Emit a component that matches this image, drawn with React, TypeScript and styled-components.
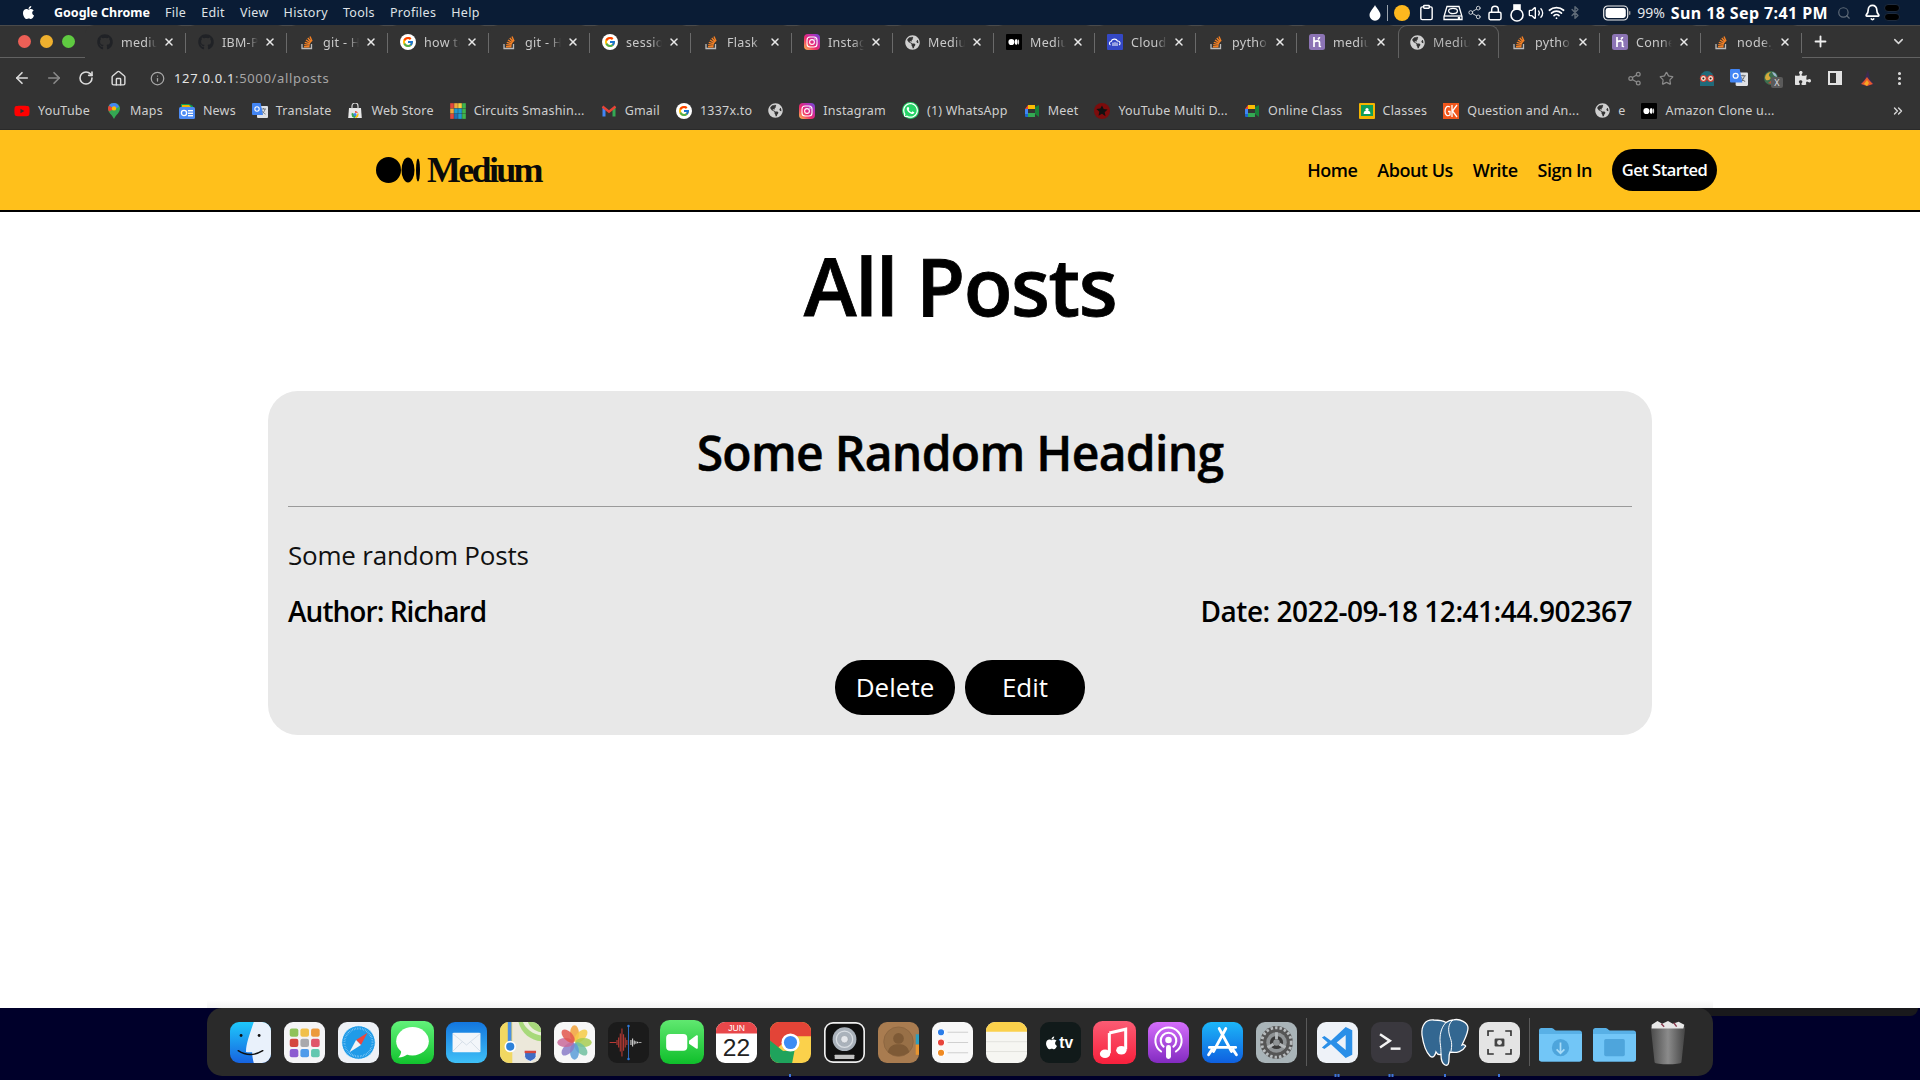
import React from "react";
import styled, { createGlobalStyle } from "styled-components";
import {
  ArrowLeft, ArrowRight, RotateCw, Home, Info, Share2, Star, EllipsisVertical,
  ChevronDown, Plus, X, Search, Bell, Lock, Clipboard, Wifi, Volume2, Bluetooth, ChevronsRight,
} from "lucide-react";
import { FaApple, FaGithub, FaGlobeAmericas, FaPuzzlePiece, FaWhatsapp, FaYoutube } from "react-icons/fa";
import { FcGoogle } from "react-icons/fc";

const Global = createGlobalStyle`
  html, body { margin: 0; padding: 0; background: #fff; }
  * { box-sizing: border-box; }
  #root { width: 1920px; height: 1080px; overflow: hidden; }
`;

const Screen = styled.div`
  width: 1920px; height: 1080px; display: flex; flex-direction: column; overflow: hidden;
  font-family: "Open Sans", "Noto Sans", sans-serif;
`;

/* ---------- macOS menu bar ---------- */
const MenuBar = styled.div`
  height: 25px; flex: none; background: #0a1c35; display: flex; align-items: center; padding-left: 21px;
  color: #e6e8ec; font: 12.5px "Noto Sans", sans-serif;
`;
const MenuItems = styled.div`display: flex; gap: 15px; margin-left: 18px;`;
const MenuItem = styled.span<{ $bold?: boolean }>`
  font-weight: ${(p) => (p.$bold ? 700 : 400)};
  letter-spacing: ${(p) => (p.$bold ? 0 : ".32px")};
  color: ${(p) => (p.$bold ? "#fff" : "#dfe2e7")};
`;
const StatusArea = styled.div`margin-left: auto; display: flex; align-items: center; height: 25px; padding-right: 20px;`;
const StatusCell = styled.span<{ $w: number; $end?: boolean }>`
  width: ${(p) => p.$w}px; display: flex; align-items: center; color: #fff;
  justify-content: ${(p) => (p.$end ? "flex-end" : "center")};
`;
const StatusDivider = styled.span`width: 1.5px; height: 16px; background: #9aa3ad;`;
const SunDot = styled.span`width: 16px; height: 16px; border-radius: 50%; background: #fdb81e;`;
const Percent = styled.span`margin-left: 6px; color: #e4e6ea; font-size: 14px; letter-spacing: 0;`;
const Clock = styled.span`margin-left: 6px; color: #fff; font-weight: 700; font-size: 16px; letter-spacing: .4px; white-space: nowrap;`;
const ToggleStack = styled.span`display: flex; flex-direction: column; gap: 1px;`;
const ToggleBar = styled.span`width: 16px; height: 8px; border-radius: 4px; background: #000; border: 1px solid #1d2a3d;`;

/* ---------- Chrome tabs ---------- */
const TabStrip = styled.div`
  height: 33px; flex: none; background: #333; display: flex; align-items: stretch;
  border-top: 1px solid #4a4a4a; border-bottom: 1px solid #626262;
`;
const Lights = styled.div`width: 85px; flex: none; display: flex; align-items: center; gap: 9px; padding-left: 18px;`;
const Light = styled.span<{ $c: string }>`width: 13px; height: 13px; border-radius: 50%; background: ${(p) => p.$c};`;
const Tab = styled.div<{ $active?: boolean; $sep?: boolean }>`
  width: 101px; flex: none; position: relative; display: flex; align-items: center; padding: 0 10px 0 11px;
  border: 1px solid ${(p) => (p.$active ? "#626262" : "transparent")};
  border-width: 1px 1px 0 1px;
  border-radius: 9px 9px 0 0;
  margin: -1px 0 -1px;
  background: #333;
  z-index: ${(p) => (p.$active ? 1 : 0)};
  &::after {
    content: "";
    display: ${(p) => (p.$sep ? "block" : "none")};
    position: absolute; right: -1px; top: 7px; height: 20px; width: 1px; background: #6a6a6a;
  }
`;
const TabTitle = styled.span<{ $active?: boolean }>`
  flex: 1; min-width: 0; margin: 0 6px 0 8px; overflow: hidden; white-space: nowrap;
  font: 12.5px "Noto Sans", sans-serif; letter-spacing: .3px;
  color: ${(p) => (p.$active ? "#b4b4b4" : "#c9c9c9")};
  -webkit-mask-image: linear-gradient(90deg, #000 70%, transparent 100%);
  mask-image: linear-gradient(90deg, #000 70%, transparent 100%);
`;
const NewTab = styled.span`display: flex; align-items: center; margin-left: 10px; color: #f0f0f0;`;
const TabMenu = styled.span`display: flex; align-items: center; margin-left: auto; padding-right: 14px; color: #d8d8d8;`;

/* ---------- toolbar ---------- */
const Toolbar = styled.div`height: 40px; flex: none; background: #333; display: flex; align-items: center; padding: 0 5px 0 6px;`;
const ToolButton = styled.span<{ $dim?: boolean }>`
  width: 32px; display: flex; justify-content: center; align-items: center;
  color: ${(p) => (p.$dim ? "#8a8a8a" : "#dcdcdc")};
`;
const Address = styled.div`display: flex; align-items: center; gap: 9px; margin-left: 16px; color: #a6a6a6; font: 13px "Noto Sans", sans-serif; letter-spacing: .66px;`;
const Host = styled.span`color: #e4e4e4;`;
const ToolRight = styled.div`margin-left: auto; display: flex; align-items: center;`;
const ToolGap = styled.span`width: 9px;`;
const ExtBadge = styled.span`
  position: absolute; left: 16px; top: 9px; width: 12px; height: 11px; border-radius: 2px; background: #5a5a5a;
  color: #ddd; font: 9px/11px "Noto Sans", sans-serif; text-align: center;
`;
const ExtSlot = styled.span`position: relative; width: 32px; height: 20px; display: flex; justify-content: center; align-items: center;`;

/* ---------- bookmarks ---------- */
const Bookmarks = styled.div`
  height: 32px; flex: none; background: #333; display: flex; align-items: center; padding: 0 14px 6px 14px; gap: 16px;
  border-bottom: 1px solid #2a2a2a;
`;
const Bookmark = styled.span`display: flex; align-items: center; gap: 8px; color: #cfcfcf; font: 12.5px "Noto Sans", sans-serif; letter-spacing: .21px; white-space: nowrap;`;
const MoreMarks = styled.span`margin-left: auto; display: flex; color: #d8d8d8; margin-right: 1px;`;

/* ---------- the page ---------- */
const Page = styled.main`flex: 1; min-height: 0; background: #fff; display: flex; flex-direction: column; position: relative;`;
const Fade = styled.div`position: absolute; left: 207px; width: 1506px; bottom: 0; height: 8px; background: linear-gradient(#fff, #f3f3f3);`;
const Nav = styled.nav`
  height: 82px; flex: none; background: #ffc01b; border-bottom: 2px solid #000;
  display: flex; align-items: center; justify-content: space-between; padding: 0 203px 0 376px;
`;
const Brand = styled.div`display: flex; align-items: center; gap: 7px;`;
const BrandName = styled.span`font: 700 36px "Liberation Serif", serif; letter-spacing: -2.7px; color: #0a0a0a; line-height: 1;`;
const NavLinks = styled.div`display: flex; align-items: center; gap: 20px;`;
const NavLink = styled.a`font-size: 18px; font-weight: 600; color: #000; letter-spacing: -.5px;`;
const CTA = styled.a`
  width: 105px; height: 42px; border-radius: 21px; background: #000; color: #fff; display: flex; align-items: center; justify-content: center;
  font-size: 16.5px; font-weight: 600; letter-spacing: -.5px; padding-bottom: 1px;
`;
const Title = styled.h1`
  margin: 18px 0 0; text-align: center; font-size: 80px; line-height: 110px; font-weight: 600; color: #000; letter-spacing: -1.5px;
  -webkit-text-stroke: .8px #000;
`;
const Card = styled.article`
  width: 1384px; height: 344px; margin: 51px auto 0; background: #e8e8e8; border-radius: 30px; padding: 20px;
  display: flex; flex-direction: column;
`;
const PostHeading = styled.h2`
  margin: 5px 0 0; text-align: center; font-size: 48px; line-height: 74px; font-weight: 600; color: #000; letter-spacing: -.7px;
  -webkit-text-stroke: .5px #000;
`;
const Rule = styled.hr`margin: 16px 0 0; border: 0; height: 1px; background: #9a9a9a; flex: none;`;
const Body = styled.p`margin: 28px 0 0; font-size: 26px; line-height: 40px; color: #111; letter-spacing: -.2px;`;
const Meta = styled.div`display: flex; justify-content: space-between; margin-top: 16px; font-size: 28px; line-height: 40px; font-weight: 600; color: #000; letter-spacing: -.5px;`;
const AuthorName = styled.span`letter-spacing: -.95px;`;
const Actions = styled.div`display: flex; justify-content: center; gap: 10px; margin-top: 29px;`;
const PillButton = styled.button`
  width: 120px; height: 55px; border: 0; border-radius: 27px; background: #000; color: #fff; padding: 0 0 2px;
  font: 400 26px "Open Sans", sans-serif;
`;

/* ---------- desktop and dock ---------- */
const Desktop = styled.div`height: 72px; flex: none; background: #00002a; position: relative;`;
const WindowEdge = styled.div`
  position: absolute; top: 0; left: 1700px; right: 2px; height: 8px; background: #19191c; border-radius: 0 0 9px 9px;
`;
const Dock = styled.div`
  position: relative; margin-left: 207px; width: 1506px; height: 68px; background: #2a2a2a; border-radius: 15px;
  display: flex; align-items: center; padding-left: 16px;
`;
const DockCell = styled.div`position: relative; width: 54px; height: 68px; flex: none; display: flex; align-items: center; justify-content: center;`;
const DockSep = styled.div`width: 7px; flex: none; display: flex; justify-content: center;`;
const DockSepLine = styled.span`width: 1px; height: 48px; background: #5a5a5a;`;
const Running = styled.span`
  position: absolute; left: 50%; bottom: -1px; transform: translateX(-50%); display: flex; gap: 1px;
`;
const RunDot = styled.span`width: 2px; height: 3px; background: #3f74d8;`;

/* ---------- favicons ---------- */
const Stack = () => (
  <svg width="16" height="16" viewBox="0 0 16 16" fill="none">
    <path d="M3 10v4.5h9.5V10" stroke="#bcbbbb" strokeWidth="1.3" />
    <path d="M5 12.8h5.5M5.2 10.6l5.4.6M5.8 8.3l5.2 1.6M7 6l4.6 2.8M8.8 4l3.6 4M11 2.4l2 4.8" stroke="#f48024" strokeWidth="1.4" />
  </svg>
);
const Insta = ({ id }: { id: string }) => (
  <svg width="16" height="16" viewBox="0 0 16 16" fill="none">
    <defs>
      <linearGradient id={id} x1="0" y1="1" x2="1" y2="0">
        <stop offset="0" stopColor="#fdc34d" /><stop offset=".4" stopColor="#ee2a6b" /><stop offset=".75" stopColor="#b62fb8" /><stop offset="1" stopColor="#5b51d8" />
      </linearGradient>
    </defs>
    <rect width="16" height="16" rx="4" fill={`url(#${id})`} />
    <rect x="3" y="3" width="10" height="10" rx="3" stroke="#fff" strokeWidth="1.1" />
    <circle cx="8" cy="8" r="2.4" stroke="#fff" strokeWidth="1.1" />
    <circle cx="11" cy="5" r=".7" fill="#fff" />
  </svg>
);
const MediumFav = () => (
  <svg width="16" height="16" viewBox="0 0 16 16">
    <rect width="16" height="16" rx="1" fill="#000" />
    <ellipse cx="5.4" cy="8" rx="3" ry="3.1" fill="#fff" /><ellipse cx="10.2" cy="8" rx="1.5" ry="2.9" fill="#fff" /><ellipse cx="12.6" cy="8" rx=".5" ry="2.7" fill="#fff" />
  </svg>
);
const CloudFav = () => (
  <svg width="16" height="16" viewBox="0 0 16 16" fill="none">
    <rect width="16" height="16" rx="1" fill="#3448c5" />
    <path d="M3.5 11C2 10.5 2 7.6 4.2 7.5 4.8 4.6 9.4 4.2 10.4 7c2.6-.3 3.6 3 1.6 4" stroke="#fff" strokeWidth="1.1" />
    <path d="M6 8.6V12M8 8.2V12M10 8.6V12" stroke="#fff" strokeWidth="1" />
  </svg>
);
const HerokuFav = () => (
  <svg width="16" height="16" viewBox="0 0 16 16" fill="none">
    <rect width="16" height="16" rx="2.5" fill="#8c74b5" />
    <path d="M5 3v10M5 8c2-1.3 5.5-2 5.5 .6V13M10.5 3c0 1-.6 1.6-1.6 2.4M10.2 11.4l1.6 1.6" stroke="#fff" strokeWidth="1.7" />
  </svg>
);
const GoogleFav = () => (
  <svg width="16" height="16" viewBox="0 0 16 16">
    <circle cx="8" cy="8" r="8" fill="#fff" />
    <FcGoogle x="2" y="2" size="12" />
  </svg>
);
const Globe = () => <FaGlobeAmericas size={15} color="#d0d0d0" />;
const Github = () => <FaGithub size={16} color="#202226" />;

const Maps = () => (
  <svg width="16" height="16" viewBox="-1 0 16 16">
    <path d="M7 0C3 0 1 3 1 5.6 1 9.4 5 12 7 16c2-4 6-6.6 6-10.4C13 3 11 0 7 0z" fill="#34a853" />
    <path d="M7 0C5 0 3.2 .8 2 2.4L7 6l5-2C11 1.5 9.4 0 7 0z" fill="#4285f4" />
    <path d="M1 5.6c0 1 .4 2 1 3L7 6 2 2.4C1.4 3.3 1 4.4 1 5.6z" fill="#ea4335" />
    <circle cx="7" cy="5.4" r="2.2" fill="#fbbc04" />
  </svg>
);
const News = () => (
  <svg width="16" height="16" viewBox="0 0 16 16">
    <path d="M2 1h8l4 2v4H2z" fill="#0f9d58" /><path d="M3 2h7l3 3H3z" fill="#f4b400" />
    <rect y="4" width="16" height="12" rx="1.5" fill="#4c8bf5" />
    <rect x="9" y="7" width="5" height="1.4" fill="#fff" /><rect x="9" y="9.6" width="5" height="1.4" fill="#fff" /><rect x="9" y="12" width="5" height="1.4" fill="#fff" />
    <circle cx="5" cy="10" r="2.6" fill="none" stroke="#fff" strokeWidth="1.3" />
  </svg>
);
const Translate = ({ size = 16 }: { size?: number }) => (
  <svg width={size} height={size} viewBox="0 0 16 16">
    <rect x="5" y="3" width="11" height="12" rx="1" fill="#dfe1e5" />
    <path d="M9 6h5M11.5 5v1M13 6c-.5 2.5-2 4-3.5 5M10 7.5c.5 1.4 2 3 3.5 3.6" stroke="#6b6f75" strokeWidth=".9" fill="none" />
    <path d="M1 0h7.6L11 12H1a1 1 0 01-1-1V1a1 1 0 011-1z" fill="#4285f4" />
    <circle cx="5" cy="6" r="2.2" fill="none" stroke="#fff" strokeWidth="1.1" />
  </svg>
);
const WebStore = () => (
  <svg width="16" height="16" viewBox="0 0 16 16">
    <path d="M2 5h12l.8 10H1.2z" fill="#e8e8e8" />
    <path d="M5 6V3a3 3 0 016 0v3" fill="none" stroke="#d8d8d8" strokeWidth="1.2" />
    <path d="M8 8a3.6 3.6 0 013.1 1.8H8z" fill="#ea4335" /><path d="M4.9 9.8A3.6 3.6 0 008 15l1.6-2.8z" fill="#34a853" /><path d="M11.1 9.8a3.6 3.6 0 01-3.1 5.4l1.6-3z" fill="#fbbc04" />
    <circle cx="8" cy="11.6" r="1.5" fill="#4285f4" />
  </svg>
);
const Tinkercad = () => (
  <svg width="16" height="16" viewBox="0 0 16 16">
    {["#e2483d", "#f2a93b", "#f6d13d", "#3fb54e", "#f2a93b", "#1d9bd1", "#1d9bd1", "#3fb54e", "#e2483d", "#1f6fb5", "#1d9bd1", "#3fb54e"].map((c, i) => (
      <rect key={i} x={(i % 4) * 4 + 0.2} y={Math.floor(i / 4) * 5.33 + 0.2} width="3.6" height="5" fill={c} />
    ))}
  </svg>
);
const Gmail = () => (
  <svg width="16" height="16" viewBox="0 0 16 16" fill="none">
    <path d="M1.5 3.5v10h3V7z" fill="#4285f4" /><path d="M14.5 3.5v10h-3V7z" fill="#34a853" />
    <path d="M1.5 3.5L8 8.6l6.5-5.1" stroke="#ea4335" strokeWidth="2.4" />
  </svg>
);
const Whats = () => <FaWhatsapp size={17} color="#fff" style={{ background: "#25d366", borderRadius: "50%" }} />;
const Meet = () => (
  <svg width="16" height="16" viewBox="0 0 16 16">
    <path d="M4 2h7v4H4z" fill="#fbbc04" /><path d="M1 6l3-4v4z" fill="#ea4335" /><rect x="1" y="6" width="3" height="5" fill="#4285f4" />
    <path d="M1 11h3v3H2a1 1 0 01-1-1z" fill="#1967d2" /><path d="M4 10h7v4H4z" fill="#34a853" /><path d="M11 4l4-2v12l-4-3z" fill="#188038" />
    <rect x="4" y="6" width="7" height="4" fill="#333" />
  </svg>
);
const Multi = () => (
  <svg width="16" height="16" viewBox="0 0 16 16">
    <circle cx="8" cy="8" r="8" fill="#7c0c0c" /><path d="M8 2.5l1.7 3.6 3.9.5-2.9 2.7.8 3.9L8 10.8l-3.5 1.9.8-3.9-2.9-2.7 3.9-.5z" fill="#111" />
  </svg>
);
const Classroom = () => (
  <svg width="16" height="16" viewBox="0 0 16 16">
    <rect width="16" height="16" rx="1" fill="#f4b400" /><rect x="2" y="2" width="12" height="11" fill="#0f9d58" />
    <circle cx="8" cy="6.5" r="1.6" fill="#fff" /><path d="M4.6 11a3.4 3.4 0 016.8 0z" fill="#fff" />
  </svg>
);
const GK = () => (
  <svg width="16" height="16" viewBox="0 0 16 16" fill="none">
    <rect width="16" height="16" fill="#f1561b" />
    <path d="M7 4C3 2 2 6 2 8.5S4 14 7 12V8.5H5M9 2v12M14 2L9.5 8l4.5 6" stroke="#fff" strokeWidth="1.3" />
  </svg>
);
const Ghost = () => (
  <svg width="20" height="20" viewBox="0 0 20 20">
    <path d="M3 11a7 8 0 0114 0v7H3z" fill="#1f6a7a" />
    <circle cx="6.4" cy="10.5" r="3" fill="#f3e4d4" stroke="#d13b2e" strokeWidth="1.2" /><circle cx="13.6" cy="10.5" r="3" fill="#f3e4d4" stroke="#d13b2e" strokeWidth="1.2" />
    <circle cx="6.4" cy="10.5" r="1" fill="#222" /><circle cx="13.6" cy="10.5" r="1" fill="#222" />
  </svg>
);
const ExtGlobe = () => (
  <svg width="16" height="16" viewBox="0 0 16 16"><circle cx="8" cy="8" r="7" fill="#3c6e4f" /><path d="M2 8a6 6 0 016-6c-2 2-3 3-1 5s-2 4-4 3z" fill="#d6a93a" /><path d="M9 2a6 6 0 015 5c-2-1-3-1-4-3z" fill="#9fb7d0" /><path d="M5 13l5-4 4 1a7 7 0 01-9 3z" fill="#b0503a" /></svg>
);
const SidePanel = () => (
  <svg width="14" height="14" viewBox="0 0 14 14"><rect x="1" y="1" width="12" height="12" fill="none" stroke="#e2e2e2" strokeWidth="2" /><rect x="8" y="1" width="5" height="12" fill="#e2e2e2" /></svg>
);
const Flame = () => (
  <svg width="16" height="18" viewBox="0 0 16 18">
    <path d="M9 1l2 9 4 5-7 2.5L1 15l4-4z" fill="#3a2a50" /><path d="M8 8l3 4 3 3-6 2-6-2 3-3z" fill="#e8582d" /><path d="M8 11l2 3-2 3-3-2z" fill="#f5a623" />
  </svg>
);
const Drop = () => (
  <svg width="12" height="16" viewBox="0 0 12 16"><path d="M6 0c1.2 3 5.5 6.6 5.5 10.2a5.5 5.5 0 01-11 0C.5 6.6 4.8 3 6 0z" fill="#fff" /></svg>
);
const Disk = () => (
  <svg width="20" height="16" viewBox="0 0 20 16" fill="none" stroke="#fff" strokeWidth="1.3">
    <path d="M4 1.5h12l3 10v3H1v-3z" /><path d="M1 11h18" /><ellipse cx="10" cy="6" rx="4.4" ry="2.6" /><circle cx="16" cy="13" r=".7" fill="#fff" />
  </svg>
);
const Mouse = () => (
  <svg width="14" height="18" viewBox="0 0 14 18" fill="none" stroke="#fff" strokeWidth="1.6">
    <rect x="1" y="5" width="12" height="12" rx="6" /><rect x="4" y="1" width="6" height="4" fill="#fff" />
  </svg>
);
const Battery = () => (
  <svg width="28" height="16" viewBox="0 0 28 16">
    <rect x=".7" y="1" width="24" height="14" rx="4" fill="none" stroke="#eee" strokeWidth="1.2" />
    <rect x="2.6" y="3" width="20.2" height="10" rx="2.4" fill="#fff" /><rect x="26" y="6" width="1.4" height="4" rx=".7" fill="#999" />
  </svg>
);
const MediumMark = () => (
  <svg width="44" height="26" viewBox="0 0 44 26">
    <ellipse cx="12.5" cy="13" rx="12.5" ry="13" fill="#000" /><ellipse cx="32" cy="13" rx="6.5" ry="12.5" fill="#000" /><ellipse cx="42" cy="13" rx="2" ry="11.5" fill="#000" />
  </svg>
);
const TabClose = () => <X size={12} strokeWidth={3} color="#e8e8e8" />;

/* ---------- dock icons ---------- */
const DI = styled.svg<{ $s?: number }>`
  width: ${(p) => p.$s ?? 41}px; height: ${(p) => p.$s ?? 41}px; display: block; flex: none; overflow: visible;
`;
const Finder = () => (
  <DI viewBox="0 0 100 100">
    <defs><linearGradient id="fa" x1="0" y1="0" x2="0" y2="1"><stop offset="0" stopColor="#1ec8fb" /><stop offset="1" stopColor="#1763e0" /></linearGradient></defs>
    <rect width="100" height="100" rx="22" fill="url(#fa)" />
    <path d="M58 0h20a22 22 0 0122 22v56a22 22 0 01-22 22H58c-2-8-4-17-4-26-6 0-10 0-15-1 0-20 8-40 19-73z" fill="#e9f1fb" />
    <circle cx="27" cy="33" r="3.5" fill="#111" /><circle cx="71" cy="33" r="3.5" fill="#111" />
    <path d="M20 70c18 12 40 12 60 0" fill="none" stroke="#111" strokeWidth="3.5" strokeLinecap="round" />
  </DI>
);
const Launchpad = () => (
  <DI viewBox="0 0 100 100">
    <rect width="100" height="100" rx="22" fill="#f4f4f6" />
    {["#8fc25a", "#f1c04a", "#ec9a3c", "#d4473f", "#a9a9ad", "#e0556a", "#8c5cd0", "#4f9bea", "#62c7b0"].map((c, i) => (
      <rect key={c} x={14 + (i % 3) * 26} y={16 + Math.floor(i / 3) * 25} width="21" height="20" rx="5" fill={c} />
    ))}
  </DI>
);
const Safari = () => (
  <DI viewBox="0 0 100 100">
    <rect width="100" height="100" rx="22" fill="#eef1f6" />
    <circle cx="50" cy="50" r="41" fill="#1f9be8" stroke="#fff" strokeWidth="2" /><circle cx="50" cy="50" r="34" fill="none" stroke="#bfe3fb" strokeWidth="5" strokeDasharray="1 3" />
    <path d="M72 26L44 44l12 12z" fill="#f0463c" /><path d="M28 74l28-18-12-12z" fill="#f3f3f3" />
  </DI>
);
const Messages = () => (
  <DI $s={43} viewBox="0 0 100 100">
    <defs><linearGradient id="ma" x1="0" y1="0" x2="0" y2="1"><stop offset="0" stopColor="#62f27a" /><stop offset="1" stopColor="#12c32e" /></linearGradient></defs>
    <rect width="100" height="100" rx="22" fill="url(#ma)" />
    <ellipse cx="50" cy="47" rx="38" ry="33" fill="#fff" /><path d="M24 68c0 8-3 13-7 17 9 0 17-4 23-9z" fill="#fff" />
  </DI>
);
const Mail = () => (
  <DI viewBox="0 0 100 100">
    <defs><linearGradient id="ml" x1="0" y1="0" x2="0" y2="1"><stop offset="0" stopColor="#1376df" /><stop offset="1" stopColor="#3fc0f7" /></linearGradient></defs>
    <rect width="100" height="100" rx="22" fill="url(#ml)" />
    <rect x="16" y="26" width="68" height="48" rx="3" fill="#f3f6fa" /><path d="M16 28l34 28 34-28M16 72l24-24M84 72L60 48" fill="none" stroke="#c7d2de" strokeWidth="1.6" />
  </DI>
);
const MapsApp = () => (
  <DI viewBox="0 0 100 100">
    <rect width="100" height="100" rx="22" fill="#ece8da" />
    <path d="M45 0h33a22 22 0 0122 22v25C76 45 52 28 45 0z" fill="#a8d97b" /><path d="M56 0c6 16 24 30 44 33v-8C84 22 72 12 68 0z" fill="#ecefdc" />
    <path d="M0 20A22 22 0 0122 0h8v100h-8A22 22 0 010 78z" fill="#f1d862" /><rect x="19" y="0" width="9" height="60" fill="#4a90e2" />
    <circle cx="25" cy="60" r="12" fill="#2d82da" stroke="#fff" strokeWidth="4" />
    <path d="M60 70h28v14c0 6-10 10-14 12-5-2-14-6-14-12z" fill="#3f6cc4" stroke="#fff" strokeWidth="2" /><rect x="60" y="70" width="28" height="6" fill="#d6473e" />
  </DI>
);
const Photos = () => (
  <DI viewBox="0 0 100 100">
    <rect width="100" height="100" rx="22" fill="#f7f7f7" />
    {["#f2a23a", "#f6cb46", "#a8cc52", "#70c0a0", "#5c9ed8", "#8a7cc8", "#c96a9a", "#e2574c"].map((c, i) => (
      <ellipse key={c} cx="50" cy="28" rx="11" ry="20" fill={c} opacity=".85" transform={`rotate(${i * 45} 50 50)`} />
    ))}
  </DI>
);
const Voice = () => (
  <DI viewBox="0 0 100 100">
    <rect width="100" height="100" rx="22" fill="#1b1b1b" />
    <path d="M4 50h16M22 44v12M26 38v24M30 28v44M34 16v68M38 30v40M42 38v24M46 44v12" stroke="#b93a35" strokeWidth="2.6" />
    <path d="M56 44v12M60 40v20M64 45v10M68 47v6M72 48v4M76 49v2M80 49v2" stroke="#d8d8d8" strokeWidth="2.6" />
    <path d="M50 8v84" stroke="#2f7ce0" strokeWidth="2" /><circle cx="50" cy="10" r="3" fill="#2f7ce0" /><circle cx="50" cy="90" r="3" fill="#2f7ce0" />
  </DI>
);
const Facetime = () => (
  <DI $s={44} viewBox="0 0 100 100">
    <defs><linearGradient id="ft" x1="0" y1="0" x2="0" y2="1"><stop offset="0" stopColor="#60e870" /><stop offset="1" stopColor="#0fbf2b" /></linearGradient></defs>
    <rect width="100" height="100" rx="22" fill="url(#ft)" />
    <rect x="14" y="32" width="48" height="38" rx="9" fill="#fff" /><path d="M66 47l16-12c2-1 4 0 4 2v26c0 2-2 3-4 2L66 54z" fill="#fff" />
  </DI>
);
const CalText = styled.text<{ $w?: number }>`font-family: "Liberation Sans", sans-serif; font-weight: ${(p) => p.$w ?? 400};`;
const Calendar = () => (
  <DI viewBox="0 0 100 100">
    <rect width="100" height="100" rx="22" fill="#fff" /><path d="M0 28V22A22 22 0 0122 0h56a22 22 0 0122 22v6z" fill="#e8474a" />
    <CalText x="50" y="22" textAnchor="middle" fontSize="21" fill="#fff">JUN</CalText>
    <CalText x="50" y="84" textAnchor="middle" fontSize="60" fill="#222">22</CalText>
  </DI>
);
const Chrome = () => (
  <DI viewBox="0 0 100 100">
    <rect width="100" height="100" rx="22" fill="#fbd14b" />
    <path d="M0 22A22 22 0 0122 0h56a22 22 0 0122 22v13H50L20 62 0 50z" fill="#e34437" />
    <path d="M0 45l32 26 28-2-6 31H22A22 22 0 010 78z" fill="#1fa35c" />
    <circle cx="50" cy="50" r="22" fill="#fff" /><circle cx="50" cy="50" r="16" fill="#3d8cf2" />
  </DI>
);
const DiskUtil = () => (
  <DI viewBox="0 0 100 100">
    <rect x="2" y="2" width="96" height="96" rx="20" fill="#111" stroke="#eee" strokeWidth="4" />
    <circle cx="50" cy="42" r="29" fill="#aab2bb" /><circle cx="50" cy="42" r="20" fill="none" stroke="#d8dde2" strokeWidth="3" /><circle cx="50" cy="42" r="9" fill="#e4e6ea" stroke="#7d858e" />
    <rect x="26" y="80" width="48" height="10" rx="1" fill="#c2c2c2" />
  </DI>
);
const Contacts = () => (
  <DI viewBox="0 0 100 100">
    <rect width="100" height="100" rx="22" fill="#a97c50" /><rect x="92" y="30" width="8" height="25" fill="#2b9fc0" /><rect x="92" y="55" width="8" height="25" fill="#e8952f" />
    <circle cx="50" cy="48" r="36" fill="#987047" stroke="#8a6540" strokeWidth="2" /><circle cx="50" cy="40" r="13" fill="#7e5a36" /><path d="M24 74c2-16 14-20 26-20s24 4 26 20c-14 12-38 12-52 0z" fill="#7e5a36" />
  </DI>
);
const Reminders = () => (
  <DI viewBox="0 0 100 100">
    <rect width="100" height="100" rx="22" fill="#f8f8f8" />
    {[["#2b7de9", 25], ["#e8453c", 50], ["#f08a22", 75]].map(([c, y]) => (
      <g key={c as string}>
        <circle cx="22" cy={y as number} r="9" fill={c as string} stroke="#fff" strokeWidth="3" />
        <path d={`M38 ${y}h50`} stroke="#cfcfcf" strokeWidth="2.4" />
      </g>
    ))}
  </DI>
);
const Notes = () => (
  <DI viewBox="0 0 100 100">
    <rect width="100" height="100" rx="22" fill="#f6f6f2" /><path d="M0 24v-2A22 22 0 0122 0h56a22 22 0 0122 22v2z" fill="#fbd14b" />
    <path d="M0 48h100M0 72h100" stroke="#d8d8d4" strokeWidth="1.6" />
  </DI>
);
const AppleTV = () => (
  <DI viewBox="0 0 100 100">
    <rect width="100" height="100" rx="22" fill="#111a1a" />
    <FaApple x="10" y="33" size="36" color="#fff" />
    <CalText $w={700} x="47" y="64" fontSize="38" fill="#fff">tv</CalText>
  </DI>
);
const Music = () => (
  <DI $s={43} viewBox="0 0 100 100">
    <defs><linearGradient id="mu" x1="0" y1="0" x2="0" y2="1"><stop offset="0" stopColor="#fb5c74" /><stop offset="1" stopColor="#f8203c" /></linearGradient></defs>
    <rect width="100" height="100" rx="22" fill="url(#mu)" />
    <path d="M38 28l38-9v47" fill="none" stroke="#fff" strokeWidth="7" /><path d="M38 28v47" stroke="#fff" strokeWidth="7" />
    <ellipse cx="28" cy="76" rx="12" ry="10" fill="#fff" /><ellipse cx="66" cy="68" rx="12" ry="10" fill="#fff" />
  </DI>
);
const Podcasts = () => (
  <DI viewBox="0 0 100 100">
    <defs><linearGradient id="po" x1="0" y1="0" x2="0" y2="1"><stop offset="0" stopColor="#d56efc" /><stop offset="1" stopColor="#832bc1" /></linearGradient></defs>
    <rect width="100" height="100" rx="22" fill="url(#po)" />
    <path d="M32 72a32 32 0 1136 0M38 60a19 19 0 1124 0" fill="none" stroke="#fff" strokeWidth="5" strokeLinecap="round" />
    <circle cx="50" cy="44" r="8" fill="#fff" /><rect x="44" y="56" width="12" height="34" rx="6" fill="#fff" />
  </DI>
);
const AppStore = () => (
  <DI viewBox="0 0 100 100">
    <defs><linearGradient id="as" x1="0" y1="0" x2="0" y2="1"><stop offset="0" stopColor="#1cb6f8" /><stop offset="1" stopColor="#0f60e0" /></linearGradient></defs>
    <rect width="100" height="100" rx="22" fill="url(#as)" />
    <path d="M58 16L28 72M42 16l30 56M18 62h64M16 80l8-12M84 80l-8-12" fill="none" stroke="#fff" strokeWidth="7" strokeLinecap="round" />
  </DI>
);
const SysPrefs = () => (
  <DI viewBox="0 0 100 100">
    <rect width="100" height="100" rx="22" fill="#a9b4b8" />
    <circle cx="50" cy="50" r="40" fill="#555" /><circle cx="50" cy="50" r="36" fill="none" stroke="#b8bcbe" strokeWidth="7" strokeDasharray="6 5" />
    <circle cx="50" cy="50" r="25" fill="#8f9395" /><circle cx="50" cy="50" r="16" fill="#3a3a3a" /><path d="M50 25v17M28 62l15-8M72 62l-15-8" stroke="#b4b8ba" strokeWidth="7" /><circle cx="50" cy="50" r="8" fill="#8f9395" />
  </DI>
);
const VSCode = () => (
  <DI viewBox="0 0 100 100">
    <rect width="100" height="100" rx="22" fill="#eef2f8" />
    <path d="M70 12L34 46 18 34l-6 4 14 12-14 12 6 4 16-12 36 34 16-8V20z" fill="#2a8fe8" /><path d="M70 32L48 50l22 18z" fill="#eef2f8" />
  </DI>
);
const Terminal = () => (
  <DI viewBox="0 0 100 100">
    <rect width="100" height="100" rx="22" fill="#3a383e" />
    <path d="M22 30l24 16-24 16" fill="none" stroke="#f3f3f3" strokeWidth="6" /><rect x="48" y="62" width="24" height="6" fill="#f3f3f3" />
  </DI>
);
const Postgres = () => (
  <DI $s={50} viewBox="0 0 100 100">
    <path d="M28 6C12 4 2 16 4 36c2 14 8 34 16 42 6 5 10 0 12-8 2 4 6 6 10 5 0 8 2 18 8 21 6 2 8-2 8-12 0-6 0-10 2-14 14 3 26-2 30-10 4-2-2-6-6-4 4-10 12-22 12-34C96 12 80 2 66 6c-6 0-10 2-14 5C44 6 36 6 28 6z" fill="#336791" stroke="#fff" strokeWidth="2.6" />
    <path d="M52 11c-8 8-12 20-12 34 0 8 2 14 2 30M66 6c-8 6-10 16-8 26 2 12 8 16 4 36" fill="none" stroke="#fff" strokeWidth="2" />
  </DI>
);
const Screenshot = () => (
  <DI viewBox="0 0 100 100">
    <rect width="100" height="100" rx="22" fill="#e4e4e4" />
    <path d="M22 34V22h14M64 22h14v12M78 66v12H64M36 78H22V66" fill="none" stroke="#333" strokeWidth="4" />
    <rect x="38" y="40" width="24" height="20" rx="3" fill="#444" /><circle cx="50" cy="50" r="6" fill="#e4e4e4" />
  </DI>
);
const Folder = ({ kind }: { kind: "down" | "win" }) => (
  <DI $s={43} viewBox="0 0 100 100">
    <path d="M0 22a6 6 0 016-6h24c4 0 6 6 10 6h54a6 6 0 016 6v60a6 6 0 01-6 6H6a6 6 0 01-6-6z" fill="#58b0e6" />
    <path d="M0 30h100v58a6 6 0 01-6 6H6a6 6 0 01-6-6z" fill="#72c6f7" />
    {kind === "down" ? (
      <>
        <circle cx="50" cy="62" r="20" fill="#4ea5dc" />
        <path d="M50 50v24M41 66l9 9 9-9" fill="none" stroke="#a8dcf8" strokeWidth="4" />
      </>
    ) : (
      <rect x="26" y="42" width="48" height="40" rx="4" fill="#4ea5dc" />
    )}
  </DI>
);
const Trash = () => (
  <DI $s={48} viewBox="0 0 100 100">
    <defs><linearGradient id="tr" x1="0" y1="0" x2="1" y2="0"><stop offset="0" stopColor="#4a4a4a" /><stop offset=".5" stopColor="#8b8b8b" /><stop offset="1" stopColor="#444" /></linearGradient></defs>
    <path d="M14 18h72l-8 74c-1 6-55 6-56 0z" fill="url(#tr)" />
    <path d="M16 14l12-8 10 6 12-6 10 6 12-4 12 6-2 8H16z" fill="#e8e8e8" /><path d="M36 12l6 6M62 10l6 8" stroke="#8a3b4f" strokeWidth="3" />
  </DI>
);

/* ---------- data ---------- */
const tabs: { icon: React.ReactNode; title: string; active?: boolean; sep?: boolean }[] = [
  { icon: <Github />, title: "medium-clone", sep: true },
  { icon: <Github />, title: "IBM-Project", sep: true },
  { icon: <Stack />, title: "git - How", sep: true },
  { icon: <GoogleFav />, title: "how to", sep: true },
  { icon: <Stack />, title: "git - How", sep: true },
  { icon: <GoogleFav />, title: "session", sep: true },
  { icon: <Stack />, title: "Flask", sep: true },
  { icon: <Insta id="ig1" />, title: "Instagram", sep: true },
  { icon: <Globe />, title: "Medium", sep: true },
  { icon: <MediumFav />, title: "Medium", sep: true },
  { icon: <CloudFav />, title: "Cloudinary", sep: true },
  { icon: <Stack />, title: "python", sep: true },
  { icon: <HerokuFav />, title: "medium" },
  { icon: <Globe />, title: "Medium", active: true },
  { icon: <Stack />, title: "python", sep: true },
  { icon: <HerokuFav />, title: "Connect", sep: true },
  { icon: <Stack />, title: "node.js", sep: true },
];

const marks: { icon: React.ReactNode; label?: string }[] = [
  { icon: <FaYoutube size={16} color="#f00" />, label: "YouTube" },
  { icon: <Maps />, label: "Maps" },
  { icon: <News />, label: "News" },
  { icon: <Translate />, label: "Translate" },
  { icon: <WebStore />, label: "Web Store" },
  { icon: <Tinkercad />, label: "Circuits Smashin..." },
  { icon: <Gmail />, label: "Gmail" },
  { icon: <GoogleFav />, label: "1337x.to" },
  { icon: <Globe /> },
  { icon: <Insta id="ig2" />, label: "Instagram" },
  { icon: <Whats />, label: "(1) WhatsApp" },
  { icon: <Meet />, label: "Meet" },
  { icon: <Multi />, label: "YouTube Multi D..." },
  { icon: <Meet />, label: "Online Class" },
  { icon: <Classroom />, label: "Classes" },
  { icon: <GK />, label: "Question and An..." },
  { icon: <Globe />, label: "e" },
  { icon: <MediumFav />, label: "Amazon Clone u..." },
];

const menus = ["File", "Edit", "View", "History", "Tools", "Profiles", "Help"];

type DockEntry = { el: React.ReactNode; run?: number } | "sep";
const dock: DockEntry[] = [
  { el: <Finder /> }, { el: <Launchpad /> }, { el: <Safari /> }, { el: <Messages /> }, { el: <Mail /> },
  { el: <MapsApp /> }, { el: <Photos /> }, { el: <Voice /> }, { el: <Facetime /> }, { el: <Calendar /> },
  { el: <Chrome />, run: 1 }, { el: <DiskUtil /> }, { el: <Contacts /> }, { el: <Reminders /> }, { el: <Notes /> },
  { el: <AppleTV /> }, { el: <Music /> }, { el: <Podcasts /> }, { el: <AppStore /> }, { el: <SysPrefs /> },
  "sep",
  { el: <VSCode />, run: 2 }, { el: <Terminal />, run: 2 }, { el: <Postgres />, run: 1 }, { el: <Screenshot />, run: 1 },
  "sep",
  { el: <Folder kind="down" /> }, { el: <Folder kind="win" /> }, { el: <Trash /> },
];

export default function App() {
  return (
    <Screen>
      <Global />
      <MenuBar>
        <FaApple size={15} color="#fff" />
        <MenuItems>
          <MenuItem $bold>Google Chrome</MenuItem>
          {menus.map((m) => <MenuItem key={m}>{m}</MenuItem>)}
        </MenuItems>
        <StatusArea>
          <StatusCell $w={12}><Drop /></StatusCell>
          <StatusCell $w={13}><StatusDivider /></StatusCell>
          <StatusCell $w={16}><SunDot /></StatusCell>
          <StatusCell $w={32}><Clipboard size={17} strokeWidth={2} /></StatusCell>
          <StatusCell $w={22}><Disk /></StatusCell>
          <StatusCell $w={20}><Share2 size={15} strokeWidth={1.5} color="#cfd3d8" /></StatusCell>
          <StatusCell $w={22}><Lock size={16} strokeWidth={2.2} /></StatusCell>
          <StatusCell $w={22}><Mouse /></StatusCell>
          <StatusCell $w={16}><Volume2 size={16} /></StatusCell>
          <StatusCell $w={24}><Wifi size={17} strokeWidth={2.4} /></StatusCell>
          <StatusCell $w={14}><Bluetooth size={15} color="#5f6b78" strokeWidth={2.4} /></StatusCell>
          <StatusCell $w={49} $end><Battery /></StatusCell>
          <Percent>99%</Percent>
          <Clock>Sun 18 Sep 7:41 PM</Clock>
          <StatusCell $w={32}><Search size={14} color="#5f6b78" /></StatusCell>
          <StatusCell $w={24}><Bell size={17} strokeWidth={2.4} /></StatusCell>
          <ToggleStack><ToggleBar /><ToggleBar /></ToggleStack>
        </StatusArea>
      </MenuBar>

      <TabStrip>
        <Lights>
          <Light $c="#ec5f56" /><Light $c="#efb02e" /><Light $c="#5fca41" />
        </Lights>
        {tabs.map((t, i) => (
          <Tab key={i} $active={t.active} $sep={t.sep}>
            {t.icon}
            <TabTitle $active={t.active}>{t.title}</TabTitle>
            <TabClose />
          </Tab>
        ))}
        <NewTab><Plus size={17} strokeWidth={2.6} /></NewTab>
        <TabMenu><ChevronDown size={15} strokeWidth={2.4} /></TabMenu>
      </TabStrip>

      <Toolbar>
        <ToolButton><ArrowLeft size={18} strokeWidth={2.2} /></ToolButton>
        <ToolButton $dim><ArrowRight size={18} strokeWidth={2.2} /></ToolButton>
        <ToolButton><RotateCw size={16} strokeWidth={2.4} /></ToolButton>
        <ToolButton><Home size={17} strokeWidth={2} /></ToolButton>
        <Address>
          <Info size={15} color="#a8a8a8" />
          <span><Host>127.0.0.1</Host>:5000/allposts</span>
        </Address>
        <ToolRight>
          <ToolButton $dim><Share2 size={15} /></ToolButton>
          <ToolButton $dim><Star size={15} /></ToolButton>
          <ToolGap />
          <ToolButton><Ghost /></ToolButton>
          <ToolButton><Translate size={18} /></ToolButton>
          <ExtSlot><ExtGlobe /><ExtBadge>X</ExtBadge></ExtSlot>
          <ToolButton><FaPuzzlePiece size={16} color="#e2e2e2" /></ToolButton>
          <ToolButton><SidePanel /></ToolButton>
          <ToolButton><Flame /></ToolButton>
          <ToolButton><EllipsisVertical size={17} strokeWidth={2.4} /></ToolButton>
        </ToolRight>
      </Toolbar>

      <Bookmarks>
        {marks.map((m, i) => (
          <Bookmark key={i}>{m.icon}{m.label}</Bookmark>
        ))}
        <MoreMarks><ChevronsRight size={14} strokeWidth={2.4} /></MoreMarks>
      </Bookmarks>

      <Page>
        <Nav>
          <Brand>
            <MediumMark />
            <BrandName>Medium</BrandName>
          </Brand>
          <NavLinks>
            <NavLink>Home</NavLink>
            <NavLink>About Us</NavLink>
            <NavLink>Write</NavLink>
            <NavLink>Sign In</NavLink>
            <CTA>Get Started</CTA>
          </NavLinks>
        </Nav>
        <Title>All Posts</Title>
        <Card>
          <PostHeading>Some Random Heading</PostHeading>
          <Rule />
          <Body>Some random Posts</Body>
          <Meta>
            <AuthorName>Author: Richard</AuthorName>
            <span>Date: 2022-09-18 12:41:44.902367</span>
          </Meta>
          <Actions>
            <PillButton>Delete</PillButton>
            <PillButton>Edit</PillButton>
          </Actions>
        </Card>
        <Fade />
      </Page>

      <Desktop>
        <WindowEdge />
        <Dock>
          {dock.map((d, i) =>
            d === "sep" ? (
              <DockSep key={i}><DockSepLine /></DockSep>
            ) : (
              <DockCell key={i}>
                {d.el}
                {d.run ? (
                  <Running>
                    {Array.from({ length: d.run }).map((_, k) => <RunDot key={k} />)}
                  </Running>
                ) : null}
              </DockCell>
            )
          )}
        </Dock>
      </Desktop>
    </Screen>
  );
}
